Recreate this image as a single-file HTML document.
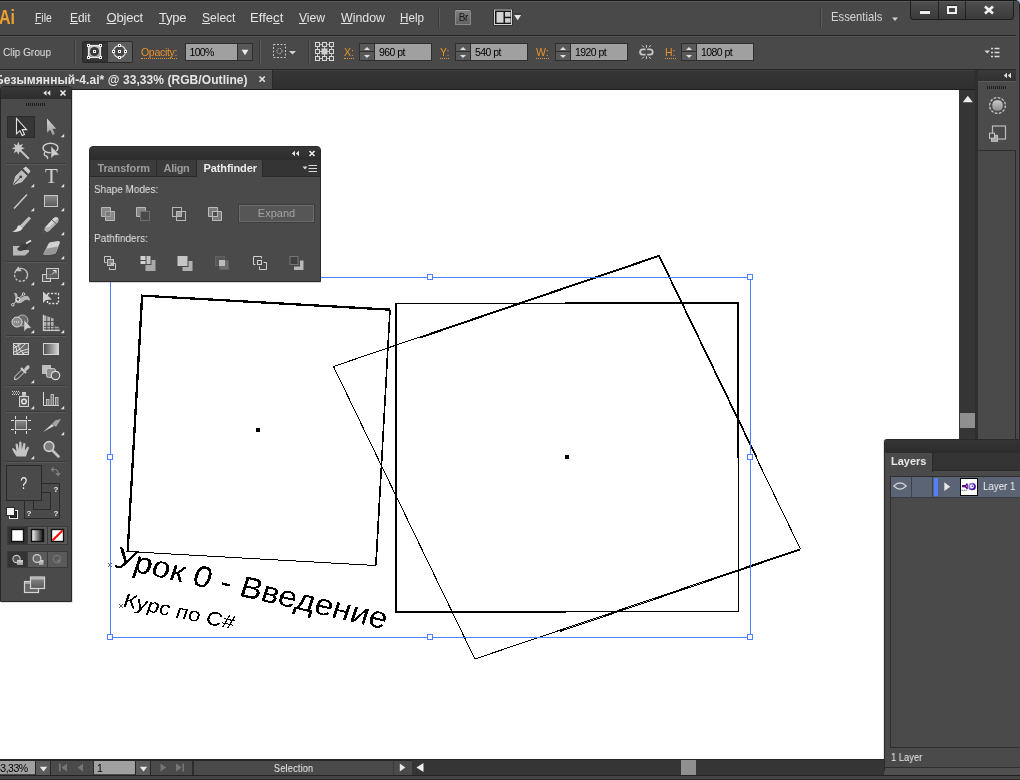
<!DOCTYPE html>
<html><head><meta charset="utf-8">
<style>
*{box-sizing:border-box;margin:0;padding:0}
html,body{width:1020px;height:780px;overflow:hidden;background:#494949;font-family:"Liberation Sans",sans-serif;font-size:11px;color:#dcdcdc}
.abs{position:absolute}
body>*{will-change:transform}
#menubar{left:0;top:0;width:1020px;height:35px;background:#494949;border-top:1px solid #161616;box-shadow:inset 0 1px 0 #5c5c5c}
#menubar .mi{position:absolute;top:9px;font-size:13px;color:#e4e4e4;white-space:nowrap;letter-spacing:-0.2px}
#menubar .mi u{text-decoration:underline;text-underline-offset:1px}
#ctrlbar{left:0;top:35px;width:1016px;height:35px;background:#494949;border-top:1px solid #262626;border-bottom:1px solid #262626;box-shadow:inset 0 1px 0 #565656}
.lbl{position:absolute;font-size:10.5px;color:#e8912d;border-bottom:1px dotted #e8912d;line-height:12px;white-space:nowrap}
.fld{position:absolute;top:43px;height:18px;background:#a0a0a0;border:1px solid #2e2e2e;color:#000;font-size:10.5px;line-height:16px;padding-left:4px;white-space:nowrap;letter-spacing:-0.55px}
.spin{position:absolute;top:43px;width:16px;height:18px;background:#595959;border:1px solid #2e2e2e}
.spin:before{content:"";position:absolute;left:3.500px;top:2.500px;border:3.500px solid transparent;border-top:0;border-bottom:3.500px solid #dedede}
.spin:after{content:"";position:absolute;left:3.500px;bottom:2.500px;border:3.500px solid transparent;border-bottom:0;border-top:3.500px solid #dedede}
.spin i{position:absolute;left:0;top:7px;width:14px;height:1px;background:#2e2e2e}
#tabbar{left:0;top:70px;width:977px;height:20px;background:linear-gradient(#363636,#2f2f2f);border-bottom:1px solid #1e1e1e;box-shadow:inset 0 1px 0 #3e3e3e}
#doctab{left:0;top:70px;width:273px;height:19px;background:#4a4a4a;border-right:1px solid #2a2a2a;box-shadow:inset 0 1px 0 #585858;color:#e6e6e6;font-weight:bold;font-size:12px;line-height:21px;white-space:nowrap;overflow:hidden}
#canvas{left:0;top:90px;width:959px;height:670px;background:#fff}
#vscroll{left:959px;top:90px;width:18px;height:670px;background:#353535}
#rdock{left:977px;top:70px;width:39px;height:706px;background:#4a4a4a;border-left:1px solid #2e2e2e;border-right:1px solid #2a2a2a}
#rightedge{left:1019px;top:1px;width:1px;height:779px;background:#2a2a2a}
#statusbar{left:0;top:760px;width:884px;height:16px;background:#353535}
#bottomedge{left:0;top:775px;width:1020px;height:5px;background:#454545;border-top:1px solid #222;border-bottom:1px solid #2a2a2a}
.panel{background:#4a4a4a}
</style></head><body>

<!-- MENU BAR -->
<div id="menubar" class="abs">
  <div class="abs" style="left:-1px;top:4px;font-size:21px;font-weight:bold;color:#eda12f;letter-spacing:0;line-height:24px;transform:scaleX(0.76);transform-origin:0 0">Ai</div>
  <span class="mi" style="left:34.5px;letter-spacing:0;transform-origin:0 50%;transform:scaleX(0.8)"><u>F</u>ile</span>
  <span class="mi" style="left:69.5px;letter-spacing:0;transform-origin:0 50%;transform:scaleX(0.915)"><u>E</u>dit</span>
  <span class="mi" style="left:106.5px"><u>O</u>bject</span>
  <span class="mi" style="left:159px"><u>T</u>ype</span>
  <span class="mi" style="left:201.5px;letter-spacing:0;transform-origin:0 50%;transform:scaleX(0.925)"><u>S</u>elect</span>
  <span class="mi" style="left:250px;letter-spacing:0.05px">Effe<u>c</u>t</span>
  <span class="mi" style="left:299px;letter-spacing:0;transform-origin:0 50%;transform:scaleX(0.93)"><u>V</u>iew</span>
  <span class="mi" style="left:341px;letter-spacing:0;transform-origin:0 50%;transform:scaleX(0.952)"><u>W</u>indow</span>
  <span class="mi" style="left:400px;letter-spacing:0;transform-origin:0 50%;transform:scaleX(0.896)"><u>H</u>elp</span>
  <div class="abs" style="left:438px;top:7px;width:1px;height:20px;background:#3a3a3a"></div>
  <div class="abs" style="left:439px;top:7px;width:1px;height:20px;background:#595959"></div>
  <!-- Br button -->
  <div class="abs" style="left:455.300px;top:8.500px;width:16px;height:15.500px;background:linear-gradient(#7e7e7e,#626262);border:1px solid #8a8a8a;border-top-color:#a2a2a2;border-radius:1px 2px 1px 1px;box-shadow:0 -1px 0 #3c3c3c;color:#161616;font-size:10px;font-weight:normal;line-height:14px;text-align:center;letter-spacing:-0.5px">Br</div>
  <!-- arrange docs -->
  <svg class="abs" style="left:493px;top:7px" width="30" height="19" viewBox="493 8 30 19">
    <rect x="493.500" y="9" width="19" height="16.500" fill="#1a1a1a"/>
    <rect x="494.500" y="10" width="17" height="14.500" fill="#161616" stroke="#d6d6d6" stroke-width="1"/>
    <rect x="496.500" y="12" width="7" height="10.700" fill="#d2d2d2"/>
    <rect x="505" y="12" width="5.600" height="4.700" fill="#cdcdcd"/>
    <rect x="505" y="18.200" width="5.600" height="4.500" fill="#cdcdcd"/>
    <path d="M514,14.700 H521.300 L517.650,20.300 Z" fill="#e6e6e6"/>
    <path d="M514,14.200 H521.300" stroke="#2a2a2a" stroke-width="1"/>
  </svg>
  <div class="abs" style="left:820px;top:7px;width:1px;height:20px;background:#3a3a3a"></div>
  <div class="abs" style="left:821px;top:7px;width:1px;height:20px;background:#5c5c5c"></div>
  <span class="mi" style="left:831px;top:8px;color:#d4d4d4;letter-spacing:0;transform-origin:0 50%;transform:scaleX(0.868)">Essentials</span>
  <svg class="abs" style="left:891px;top:16px" width="8" height="5"><path d="M1,0.5 L7,0.5 L4,4 Z" fill="#d0d0d0"/></svg>
  <!-- window buttons -->
  <div class="abs" style="left:910px;top:-1px;width:104px;height:20px;border:1px solid #1c1c1c;border-top-color:#161616;border-radius:0 0 4px 4px;background:linear-gradient(#4e4e4e,#3b3b3b);box-shadow:inset 0 1px 0 #5a5a5a"></div>
  <div class="abs" style="left:938px;top:-1px;width:1px;height:19px;background:#222"></div>
  <div class="abs" style="left:965px;top:-1px;width:1px;height:19px;background:#222"></div>
  <div class="abs" style="left:920px;top:10px;width:10px;height:3px;background:#f0f0f0;box-shadow:0 -1px 0 #2a2a2a"></div>
  <div class="abs" style="left:947px;top:5px;width:10px;height:8px;border:2px solid #f0f0f0;box-shadow:0 -1px 0 #2a2a2a"></div>
  <svg class="abs" style="left:983px;top:4px" width="12" height="10" viewBox="0 0 12 10"><path d="M2,1.500 L10,8.500 M10,1.500 L2,8.500" stroke="#f0f0f0" stroke-width="2.700" fill="none"/></svg>
</div>

<!-- CONTROL BAR -->
<div id="ctrlbar" class="abs"></div>
<div class="abs" style="left:2.500px;top:46px;font-size:11px;color:#e4e4e4;white-space:nowrap;transform-origin:0 50%;transform:scaleX(0.913)">Clip Group</div>


<!-- control bar widgets -->
<div class="abs" style="left:74px;top:40px;width:1px;height:25px;background:#3a3a3a"></div>
<div class="abs" style="left:75px;top:40px;width:1px;height:25px;background:#5a5a5a"></div>
<div class="abs" style="left:82px;top:41px;width:51px;height:22px;background:#5c5c5c;border:1px solid #2a2a2a;border-radius:2px"></div>
<div class="abs" style="left:83px;top:42px;width:25px;height:20px;background:#353535;box-shadow:inset 0 0 0 1px #2e2e2e"></div>
<svg class="abs" style="left:82px;top:40px" width="52" height="24" viewBox="82 40 52 24">
  <defs><linearGradient id="gI" x1="0" y1="0" x2="0" y2="1"><stop offset="0" stop-color="#c4c4c4"/><stop offset="1" stop-color="#8c8c8c"/></linearGradient></defs>
  <rect x="88.500" y="45.500" width="12" height="12" fill="url(#gI)" stroke="#e6e6e6" stroke-width="1.200"/>
  <circle cx="94.500" cy="51.500" r="4.600" fill="#3b3b3b"/>
  <circle cx="94.500" cy="51.500" r="5.400" fill="none" stroke="#dcdcdc" stroke-width="0.500"/>
  <g fill="#f2f2f2"><rect x="87" y="44" width="3" height="3"/><rect x="99" y="44" width="3" height="3"/><rect x="87" y="56" width="3" height="3"/><rect x="99" y="56" width="3" height="3"/><rect x="93" y="50" width="3" height="3"/></g>
  <g fill="#1e1e1e"><rect x="88" y="45" width="1" height="1"/><rect x="100" y="45" width="1" height="1"/><rect x="88" y="57" width="1" height="1"/><rect x="100" y="57" width="1" height="1"/><rect x="94" y="51" width="1" height="1"/></g>
  <circle cx="119.500" cy="51.500" r="6" fill="#484848" stroke="#e0e0e0" stroke-width="1.100"/>
  <g fill="#f2f2f2"><rect x="118" y="44" width="3" height="3"/><rect x="118" y="56" width="3" height="3"/><rect x="112" y="50" width="3" height="3"/><rect x="124" y="50" width="3" height="3"/><rect x="118" y="50" width="3" height="3"/></g>
  <g fill="#1e1e1e"><rect x="119" y="45" width="1" height="1"/><rect x="119" y="57" width="1" height="1"/><rect x="113" y="51" width="1" height="1"/><rect x="125" y="51" width="1" height="1"/><rect x="119" y="51" width="1" height="1"/></g>
</svg>
<span class="lbl" style="left:140.5px;top:46px;letter-spacing:-0.3px">Opacity:</span>
<div class="fld" style="left:185px;width:53px;padding-left:3.500px;letter-spacing:-0.7px">100%</div>
<div class="abs" style="left:237px;top:43px;width:16px;height:18px;background:#585858;border:1px solid #2e2e2e"></div>
<svg class="abs" style="left:241px;top:49px" width="9" height="7"><path d="M0.600,0.800 L7.400,0.800 L4,6.200 Z" fill="#ececec"/></svg>
<div class="abs" style="left:259px;top:40px;width:1px;height:25px;background:#3a3a3a"></div>
<div class="abs" style="left:260px;top:40px;width:1px;height:25px;background:#5a5a5a"></div>
<svg class="abs" style="left:272px;top:43px" width="26" height="17" viewBox="0 0 26 17">
  <rect x="1.5" y="1.5" width="12" height="13" fill="none" stroke="#c4c4c4" stroke-dasharray="2 1.5"/>
  <circle cx="7.5" cy="8" r="2.6" fill="none" stroke="#c4c4c4" stroke-dasharray="1.5 1"/>
  <path d="M17,8 L24,8 L20.5,11.5 Z" fill="#d0d0d0"/>
</svg>
<div class="abs" style="left:308px;top:40px;width:1px;height:25px;background:#3a3a3a"></div>
<div class="abs" style="left:309px;top:40px;width:1px;height:25px;background:#5a5a5a"></div>
<svg class="abs" style="left:314px;top:41px" width="22" height="22" viewBox="0 0 22 22">
  <path d="M3.500,3.500 H17.500 V17.500 H3.500 Z M3.500,10.500 H17.500 M10.500,3.500 V17.500" fill="none" stroke="#c4c4c4"/>
  <g fill="#4f4f4f" stroke="#d8d8d8">
   <rect x="1.500" y="1.500" width="4" height="4"/><rect x="8.500" y="1.500" width="4" height="4"/><rect x="15.500" y="1.500" width="4" height="4"/>
   <rect x="1.500" y="8.500" width="4" height="4"/><rect x="15.500" y="8.500" width="4" height="4"/>
   <rect x="1.500" y="15.500" width="4" height="4"/><rect x="8.500" y="15.500" width="4" height="4"/><rect x="15.500" y="15.500" width="4" height="4"/>
  </g>
  <rect x="7.500" y="7.500" width="6" height="6" fill="#cfcfcf"/>
</svg>
<span class="lbl" style="left:344px;top:46px">X:</span>
<div class="spin" style="left:359px"><i></i></div><div class="fld" style="left:374px;width:58px">960 pt</div>
<span class="lbl" style="left:440px;top:46px">Y:</span>
<div class="spin" style="left:455px"><i></i></div><div class="fld" style="left:470px;width:58px">540 pt</div>
<span class="lbl" style="left:536px;top:46px">W:</span>
<div class="spin" style="left:555px"><i></i></div><div class="fld" style="left:570px;width:58px">1920 pt</div>
<svg class="abs" style="left:637px;top:42px" width="18" height="19" viewBox="637 42 18 19">
  <path d="M645.600,49.400 H642.700 A2.600,2.600 0 0 0 642.700,54.600 H645.600 M647.200,49.400 H650.100 A2.600,2.600 0 0 1 650.100,54.600 H647.200" fill="none" stroke="#c6c6c6" stroke-width="1.900"/>
  <path d="M646.400,45 V47.700 M646.400,56.300 V59 M642,45.300 L643.800,47.200 M650.800,45.300 L649,47.200 M642,58.700 L643.800,56.800 M650.800,58.700 L649,56.800" stroke="#d4d4d4" stroke-width="1"/>
</svg>
<span class="lbl" style="left:665px;top:46px">H:</span>
<div class="spin" style="left:681px"><i></i></div><div class="fld" style="left:696px;width:58px">1080 pt</div>
<svg class="abs" style="left:984px;top:47px" width="16" height="11" viewBox="0 0 16 11">
  <path d="M0.5,3.5 L6,3.5 L3.2,6.5 Z" fill="#d8d8d8"/>
  <path d="M7,1.5 H9 M7,5.5 H9 M7,9.5 H9 M10.5,1.5 H15.5 M10.5,5.5 H15.5 M10.5,9.5 H15.5" stroke="#d8d8d8" stroke-width="1.4"/>
</svg>

<!-- TAB BAR -->
<div id="tabbar" class="abs"></div>
<div id="doctab" class="abs"><span style="position:absolute;left:-5px;letter-spacing:0.07px">Безымянный-4.ai* @ 33,33% (RGB/Outline)</span></div>


<svg class="abs" style="left:258px;top:75px" width="8" height="8"><path d="M1.500,1.500 L6.800,6.800 M6.800,1.500 L1.500,6.800" stroke="#e4e4e4" stroke-width="1.600" fill="none"/></svg>
<!-- CANVAS -->
<div id="canvas" class="abs"></div>
<svg class="abs" style="left:0;top:89px" width="959" height="671" viewBox="0 89 959 671">
  <g shape-rendering="crispEdges" fill="none" stroke="#000">
    <!-- left tilted square -->
    <polygon points="141.5,295 390,309 375.5,565.5 127,551.5" stroke-width="1"/>
    <polyline points="127.8,551 142.3,295.8 390,309.8" stroke-width="2"/>
    <polyline points="390,309.5 376,565" stroke-width="1.6"/>
    <!-- big rectangle -->
    <rect x="395.5" y="303.5" width="343" height="308" stroke-width="1"/>
    <line x1="396.5" y1="303" x2="396.5" y2="612" stroke-width="1"/>
    <line x1="565" y1="302.5" x2="739" y2="302.5" stroke-width="1"/>
    <line x1="737.5" y1="303" x2="737.5" y2="458" stroke-width="1"/>
    <line x1="395" y1="612.5" x2="566" y2="612.5" stroke-width="1"/>
    <!-- skewed quad -->
    <polygon points="333.5,366.5 658.5,255.5 800.3,548.8 474.9,659" stroke-width="1"/>
    <polyline points="420,338 658.5,256.5" stroke-width="1"/>
    <polyline points="800.3,549.8 560,631.5" stroke-width="1"/>
    <polyline points="659.300,255.500 757,457.500" stroke-width="1"/>
  </g>
  <rect x="256" y="428" width="4" height="4" fill="#000"/>
  <rect x="565" y="455" width="4" height="4" fill="#000"/>
  <!-- text -->
  <filter id="thr" x="-5%" y="-5%" width="110%" height="110%"><feComponentTransfer><feFuncA type="discrete" tableValues="0 0 1 1"/></feComponentTransfer></filter>
  <g fill="#000" font-family="Liberation Sans, sans-serif" filter="url(#thr)">
    <text transform="translate(112.500,566.500) rotate(13) skewX(-5)" font-size="30" textLength="279" lengthAdjust="spacingAndGlyphs">Урок 0 - Введение</text>
    <text transform="translate(122,606) rotate(12) skewX(-6)" font-size="19.500" textLength="113" lengthAdjust="spacingAndGlyphs">Курс по C#</text>
  </g>
  <path d="M108,563 l4,4 m0,-4 l-4,4 M119,604 l4,4 m0,-4 l-4,4" stroke="#333" stroke-width="0.8" fill="none"/>
  <!-- selection bbox -->
  <g shape-rendering="crispEdges" stroke="#4f80ff" stroke-width="1" fill="none">
    <rect x="110.5" y="277.5" width="640" height="360"/>
    <g fill="#fff">
      <rect x="107.5" y="274.5" width="5" height="5"/><rect x="427.5" y="274.5" width="5" height="5"/><rect x="747.5" y="274.5" width="5" height="5"/>
      <rect x="107.5" y="454.5" width="5" height="5"/><rect x="747.5" y="454.5" width="5" height="5"/>
      <rect x="107.5" y="634.5" width="5" height="5"/><rect x="427.5" y="634.5" width="5" height="5"/><rect x="747.5" y="634.5" width="5" height="5"/>
    </g>
  </g>
</svg>
<!-- vertical scrollbar -->
<div id="vscroll" class="abs"></div>
<svg class="abs" style="left:962px;top:95px" width="12" height="8"><path d="M5.800,0.800 L10.800,7.200 L0.800,7.200 Z" fill="#ededed"/></svg>
<div class="abs" style="left:960px;top:413px;width:15px;height:15px;background:#8f8f8f"></div>
<!-- right dock -->
<div class="abs" style="left:975px;top:70px;width:3px;height:706px;background:#2e2e2e"></div>
<div id="rdock" class="abs"></div>
<div class="abs" style="left:978px;top:70px;width:38px;height:11px;background:linear-gradient(#3a3a3a,#303030)"></div>
<svg class="abs" style="left:1003px;top:72px" width="9" height="7"><path d="M4,0.800 L4,6.200 L0.800,3.500 Z M8,0.800 L8,6.200 L4.800,3.500 Z" fill="#e0e0e0"/></svg>
<div class="abs" style="left:978px;top:81px;width:38px;height:70px;background:#4b4b4b;border-top:1px solid #5a5a5a;border-bottom:1px solid #2e2e2e"></div>
<div class="abs" style="left:987px;top:86px;width:20px;height:3px;background:repeating-linear-gradient(90deg,#1e1e1e 0 1px,transparent 1px 2px)"></div>
<svg class="abs" style="left:987px;top:95px" width="21" height="21" viewBox="0 0 21 21">
  <defs><linearGradient id="gA" x1="0" y1="0" x2="0" y2="1"><stop offset="0" stop-color="#c8c8c8"/><stop offset="1" stop-color="#8e8e8e"/></linearGradient></defs>
  <circle cx="10.5" cy="10.5" r="7.900" fill="none" stroke="#c4c4c4" stroke-width="1.300" stroke-dasharray="2.700 1.430"/>
  <rect x="5.300" y="5.300" width="10.400" height="10.400" rx="4.300" fill="url(#gA)"/>
</svg>
<svg class="abs" style="left:988px;top:125px" width="20" height="19" viewBox="0 0 20 19">
  <rect x="4.500" y="1" width="13" height="13" fill="none" stroke="#bdbdbd" stroke-width="1.200"/>
  <rect x="3.500" y="10.300" width="6" height="6" fill="#a8a8a8" stroke="#c4c4c4"/>
  <rect x="1.500" y="8.200" width="5" height="5" fill="#4a4a4a" stroke="#c8c8c8"/>
</svg>
<div id="rightedge" class="abs"></div>
<div class="abs" style="left:1014px;top:0;width:6px;height:6px;background:#a9c6ec"></div><div class="abs" style="left:1014px;top:0;width:5.700px;height:10px;background:#494949;border-top:1px solid #161616;border-right:1.200px solid #222;border-radius:0 5px 0 0;box-shadow:inset 0 1px 0 #5a5a5a"></div>

<!-- STATUS BAR -->
<div id="statusbar" class="abs"></div>
<div class="abs" style="left:0;top:760px;width:412px;height:15px;background:#4a4a4a"></div>
<div class="abs" style="left:0;top:761px;width:35px;height:13px;background:#a0a0a0;color:#000;font-size:10.5px;line-height:15px;letter-spacing:-0.5px;overflow:hidden;white-space:nowrap"><span style="position:absolute;left:-5px">33,33%</span></div>
<div class="abs" style="left:35px;top:760px;width:16px;height:15px;background:#5c5c5c;border-left:1px solid #262626;border-right:1px solid #262626"></div>
<svg class="abs" style="left:39px;top:766px" width="9" height="6"><path d="M0.800,0.800 L8.200,0.800 L4.500,5.600 Z" fill="#e8e8e8"/></svg>
<svg class="abs" style="left:58px;top:763px" width="28" height="9" viewBox="0 0 28 9"><path d="M1,0.5 H2.6 V8.5 H1 Z M9,0.5 V8.5 L3.2,4.5 Z M25,0.5 V8.5 L19.5,4.5 Z" fill="#757575"/></svg>
<div class="abs" style="left:93px;top:760px;width:1px;height:15px;background:#2e2e2e"></div>
<div class="abs" style="left:94px;top:761px;width:41px;height:13px;background:#a0a0a0;color:#000;font-size:10.5px;line-height:15px;padding-left:3px">1</div>
<div class="abs" style="left:135px;top:760px;width:16px;height:15px;background:#5c5c5c;border-left:1px solid #262626;border-right:1px solid #262626"></div>
<svg class="abs" style="left:139px;top:766px" width="9" height="6"><path d="M0.800,0.800 L8.200,0.800 L4.500,5.600 Z" fill="#e8e8e8"/></svg>
<svg class="abs" style="left:159px;top:763px" width="28" height="9" viewBox="0 0 28 9"><path d="M1.5,0.5 V8.5 L7.2,4.5 Z M17,0.5 V8.5 L22.8,4.5 Z M23.4,0.5 H25 V8.5 H23.4 Z" fill="#757575"/></svg>
<div class="abs" style="left:192px;top:760px;width:2px;height:15px;background:#2e2e2e"></div>
<div class="abs" style="left:194px;top:760px;width:199px;height:15px;color:#e8e8e8;font-size:11px;line-height:17px;text-align:center;overflow:hidden;transform:scaleX(0.87)">Selection</div>
<div class="abs" style="left:393px;top:760px;width:1px;height:15px;background:#3a3a3a"></div>
<svg class="abs" style="left:399px;top:763px" width="7" height="9"><path d="M0.800,0.600 V8.400 L6.300,4.500 Z" fill="#e8e8e8"/></svg>
<svg class="abs" style="left:416px;top:763px" width="8" height="9"><path d="M7.5,0 V9 L0.5,4.5 Z" fill="#f0f0f0"/></svg>
<div class="abs" style="left:681px;top:760px;width:15px;height:15px;background:#8f8f8f"></div>
<div class="abs" style="left:0;top:759px;width:884px;height:1px;background:#262626"></div><div class="abs" style="left:0;top:760px;width:412px;height:1px;background:#262626"></div>
<div id="bottomedge" class="abs"></div>

<!-- LAYERS PANEL -->
<div class="abs" style="left:883px;top:440px;width:1px;height:319px;background:#e2e2e2"></div>
<div class="abs" style="left:884px;top:439px;width:136px;height:332px;background:#4a4a4a;border-left:1px solid #2a2a2a;border-top:1px solid #2a2a2a;border-radius:3px 0 0 0"></div>
<div class="abs" style="left:885px;top:440px;width:135px;height:13px;background:linear-gradient(#343434,#2c2c2c);border-radius:3px 0 0 0"></div>
<div class="abs" style="left:885px;top:453px;width:135px;height:18px;background:#333;border-bottom:1px solid #2a2a2a"></div>
<div class="abs" style="left:885px;top:453px;width:48px;height:19px;background:#4a4a4a;border-right:1px solid #2a2a2a;color:#e8e8e8;font-weight:bold;font-size:11px;line-height:17px;padding-left:6px">Layers</div>
<div class="abs" style="left:890px;top:476px;width:130px;height:272px;border:1px solid #2e2e2e;border-right:0;background:#4a4a4a"></div>
<div class="abs" style="left:891px;top:477px;width:129px;height:21px;background:#5b6474;border-bottom:1px solid #383c44"></div>
<div class="abs" style="left:911px;top:477px;width:1px;height:20px;background:#3c424c"></div>
<div class="abs" style="left:932px;top:477px;width:1px;height:20px;background:#3c424c"></div>
<svg class="abs" style="left:893px;top:481px" width="14" height="10" viewBox="0 0 14 10"><path d="M0.800,5 Q7,-1.200 13.200,5 Q7,11.200 0.800,5 Z" fill="none" stroke="#d6d6d6" stroke-width="1.100"/></svg>
<div class="abs" style="left:934px;top:478px;width:4px;height:18px;background:#4f80ff"></div>
<svg class="abs" style="left:943px;top:481px" width="8" height="11"><path d="M1.300,1.300 V10 L7.200,5.650 Z" fill="#e6e6e6"/></svg>
<svg class="abs" style="left:960px;top:478px" width="18" height="18" viewBox="0 0 18 18">
  <defs><linearGradient id="gT" x1="0" y1="0" x2="1" y2="0.600"><stop offset="0" stop-color="#b49af4"/><stop offset="1" stop-color="#3a0a96"/></linearGradient></defs>
  <rect x="0.500" y="0.500" width="17" height="17" fill="#fff" stroke="#050505"/>
  <rect x="2" y="7" width="4" height="2.300" fill="#5e0e7e"/>
  <path d="M7.200,5.600 V11.200 M7,5.900 L5,8.200 L7,10.600" fill="none" stroke="#5e0e7e" stroke-width="1.200"/>
  <circle cx="12" cy="8.500" r="2.900" fill="none" stroke="url(#gT)" stroke-width="1.900"/>
  <circle cx="12.300" cy="8.300" r="0.800" fill="#4a1ab0"/>
  <path d="M1.500,12.300 h5.500" stroke="#4a4a4a" stroke-width="0.700" stroke-dasharray="1.500 0.500"/>
</svg>
<div class="abs" style="left:982.500px;top:480px;font-size:11px;color:#f2f2f2;white-space:nowrap;line-height:13px;transform-origin:0 50%;transform:scaleX(0.886)">Layer 1</div>
<div class="abs" style="left:890.500px;top:751px;font-size:11px;color:#ececec;white-space:nowrap;line-height:13px;transform-origin:0 50%;transform:scaleX(0.85)">1 Layer</div>
<div class="abs" style="left:885px;top:767px;width:135px;height:1px;background:#2e2e2e"></div>
<div class="abs" style="left:885px;top:768px;width:135px;height:7px;background:#505050"></div>


<!-- PATHFINDER PANEL -->
<div class="abs" style="left:89px;top:146px;width:232px;height:136px;background:#4a4a4a;border:1px solid #2a2a2a;border-radius:4px 4px 0 0;box-shadow:0 1px 0 rgba(0,0,0,0.15)"></div>
<div class="abs" style="left:90px;top:147px;width:230px;height:13px;background:linear-gradient(#363636,#2c2c2c);border-radius:3px 3px 0 0"></div>
<svg class="abs" style="left:291px;top:150px" width="9" height="7"><path d="M4,0.800 L4,6.200 L0.800,3.500 Z M8,0.800 L8,6.200 L4.800,3.500 Z" fill="#e0e0e0"/></svg>
<svg class="abs" style="left:308px;top:150px" width="8" height="7"><path d="M1.500,1 L6.500,6 M6.500,1 L1.500,6" stroke="#ececec" stroke-width="1.600" fill="none"/></svg>
<div class="abs" style="left:90px;top:160px;width:230px;height:17px;background:#343434;border-bottom:1px solid #2a2a2a"></div>
<div class="abs" style="left:90px;top:160px;width:67px;height:16px;background:#3b3b3b;border-right:1px solid #2a2a2a;color:#9c9c9c;font-weight:bold;font-size:11px;line-height:16px;padding-left:7.500px;letter-spacing:-0.15px;white-space:nowrap">Transform</div>
<div class="abs" style="left:157px;top:160px;width:40px;height:16px;background:#3b3b3b;border-right:1px solid #2a2a2a;color:#9c9c9c;font-weight:bold;font-size:11px;line-height:16px;padding-left:6.500px;letter-spacing:-0.3px;white-space:nowrap">Align</div>
<div class="abs" style="left:197px;top:160px;width:66px;height:17px;background:#4a4a4a;border-right:1px solid #2a2a2a;color:#ececec;font-weight:bold;font-size:11px;line-height:16px;padding-left:6.500px;letter-spacing:-0.1px;white-space:nowrap">Pathfinder</div>
<svg class="abs" style="left:302px;top:164px" width="16" height="9" viewBox="0 0 16 9">
  <path d="M0.500,2.500 L5.500,2.500 L3,5.500 Z" fill="#d8d8d8"/>
  <path d="M6.500,1.500 H15 M6.500,4.500 H15 M6.500,7.500 H15" stroke="#d8d8d8" stroke-width="1"/>
</svg>
<div class="abs" style="left:94px;top:183px;font-size:11px;color:#e2e2e2;white-space:nowrap;line-height:13px;transform-origin:0 50%;transform:scaleX(0.905)">Shape Modes:</div>
<div class="abs" style="left:94px;top:232px;font-size:11px;color:#e2e2e2;white-space:nowrap;line-height:13px;transform-origin:0 50%;transform:scaleX(0.917)">Pathfinders:</div>
<div class="abs" style="left:239px;top:205px;width:75px;height:17px;background:#565656;border:1px solid #6b6b6b;box-shadow:0 0 0 1px #3e3e3e;color:#a2a2a2;font-size:11px;line-height:15px;text-align:center">Expand</div>
<svg class="abs" style="left:98px;top:203px" width="130" height="20" viewBox="0 0 130 20">
  <defs><linearGradient id="gP" x1="0" y1="0" x2="1" y2="1"><stop offset="0" stop-color="#8a8a8a"/><stop offset="1" stop-color="#b4b4b4"/></linearGradient></defs>
  <!-- unite -->
  <path d="M3.500,4.500 H12.500 V8.500 H16.500 V17.500 H7.500 V13.500 H3.500 Z" fill="#868686" stroke="#b8b8b8"/>
  <rect x="7.500" y="8.500" width="5" height="5" fill="#7a7a7a" stroke="#a4a4a4"/>
  <!-- minus front -->
  <path d="M38.500,4.500 H47.500 V8.500 H42.500 V13.500 H38.500 Z" fill="#868686" stroke="#b8b8b8"/>
  <rect x="42.500" y="8.500" width="9" height="9" fill="none" stroke="#6e6e6e"/>
  <!-- intersect -->
  <rect x="74.500" y="4.500" width="9" height="9" fill="none" stroke="#b8b8b8"/>
  <rect x="78.500" y="8.500" width="9" height="9" fill="none" stroke="#b8b8b8"/>
  <rect x="79" y="9" width="4" height="4" fill="#9a9a9a"/>
  <!-- exclude -->
  <path d="M110.500,4.500 H119.500 V8.500 H123.500 V17.500 H114.500 V13.500 H110.500 Z" fill="#7a7a7a" stroke="#bcbcbc"/>
  <rect x="114.500" y="8.500" width="5" height="5" fill="#4a4a4a" stroke="#bcbcbc"/>
</svg>
<svg class="abs" style="left:102px;top:254px" width="206" height="20" viewBox="0 0 206 20">
  <!-- divide -->
  <g fill="none" stroke="#c8c8c8"><path d="M2.500,2.500 H8.500 V4.500 M2.500,2.500 V8.500 H4.500"/><rect x="5.500" y="5.500" width="6" height="6" fill="#7a7a7a"/><path d="M13.500,9.500 V15.500 H7.500 V13.500 M13.500,9.500 H11.500"/><rect x="8.500" y="8.500" width="3" height="3" fill="#bdbdbd" stroke="none"/></g>
  <!-- trim -->
  <g transform="translate(-2.500,0)"><rect x="41" y="2" width="5" height="4" fill="#d2d2d2"/><rect x="41" y="7" width="5" height="3" fill="#d2d2d2"/><rect x="47" y="2" width="4" height="8" fill="#c4c4c4"/>
  <path d="M46,11 H52 V6 H56 V17 H46 Z" fill="#a8a8a8"/></g>
  <!-- merge -->
  <g transform="translate(-1.500,0)"><rect x="77" y="2" width="10" height="10" fill="#c6c6c6"/><path d="M82,13 H88 V7 H92 V17 H82 Z" fill="#b0b0b0"/></g>
  <!-- crop -->
  <g transform="translate(-1,0)"><rect x="114.500" y="2.500" width="9" height="9" fill="#565656" stroke="#626262"/><rect x="118.500" y="6.500" width="9" height="9" fill="#6e6e6e" stroke="#626262"/><rect x="118" y="6" width="6" height="6" fill="#bcbcbc"/></g>
  <!-- outline -->
  <g fill="none" stroke="#d0d0d0" transform="translate(-1,0)"><path d="M154.500,10.500 H152.500 V2.500 H160.500 V4.500"/><rect x="156.500" y="6.500" width="4" height="4"/><path d="M158.500,12.500 V15.500 H165.500 V8.500 H162.500"/></g>
  <!-- minus back -->
  <g transform="translate(-1.500,0)"><rect x="189.500" y="2.500" width="8" height="8" fill="#404040" stroke="#767676"/><path d="M199.500,6.500 H203 V16 H193.500 V12.500 H199.500 Z" fill="#b8b8b8"/><path d="M198.500,7 H201 V14 H194 V11.500 H198.500 Z" fill="#4a4a4a" opacity="0"/></g>
</svg>


<!-- TOOLBOX -->
<div class="abs" style="left:0;top:86px;width:72px;height:516px;background:#4a4a4a;border:1px solid #262626;border-radius:4px 4px 0 0;box-shadow:1px 1px 0 rgba(0,0,0,0.12)"></div>
<div class="abs" style="left:1px;top:87px;width:70px;height:12px;background:linear-gradient(#383838,#2d2d2d);border-radius:0 3px 0 0"></div>
<svg class="abs" style="left:0;top:85px" width="73" height="518" viewBox="0 85 73 518">
<defs>
 <linearGradient id="tg" x1="0" y1="0" x2="0" y2="1"><stop offset="0" stop-color="#8a8a8a"/><stop offset="1" stop-color="#5a5a5a"/></linearGradient>
 <linearGradient id="tg2" x1="0" y1="0" x2="1" y2="0"><stop offset="0" stop-color="#4a4a4a"/><stop offset="1" stop-color="#d8d8d8"/></linearGradient>
 <linearGradient id="tg3" x1="0" y1="0" x2="1" y2="0"><stop offset="0" stop-color="#ffffff"/><stop offset="1" stop-color="#050505"/></linearGradient>
 <linearGradient id="tg4" x1="0" y1="0" x2="0" y2="1"><stop offset="0" stop-color="#d6d6d6"/><stop offset="1" stop-color="#9a9a9a"/></linearGradient>
</defs>
<!-- header icons -->
<path d="M46.500,90.200 v5.600 l-3.300,-2.800 z M50.300,90.200 v5.600 l-3.300,-2.800 z" fill="#e0e0e0"/>
<path d="M60.500,90.500 l5,5 m0,-5 l-5,5" stroke="#ececec" stroke-width="1.600" fill="none"/>
<!-- grip -->
<g fill="#1c1c1c"><rect x="26" y="103" width="1" height="3"/><rect x="28" y="103" width="1" height="3"/><rect x="30" y="103" width="1" height="3"/><rect x="32" y="103" width="1" height="3"/><rect x="34" y="103" width="1" height="3"/><rect x="36" y="103" width="1" height="3"/><rect x="38" y="103" width="1" height="3"/><rect x="40" y="103" width="1" height="3"/><rect x="42" y="103" width="1" height="3"/><rect x="44" y="103" width="1" height="3"/></g>
<!-- separators -->
<g stroke="#3a3a3a" stroke-width="1"><path d="M6,163.500 H66 M6,261.500 H66 M6,335.500 H66 M6,385.500 H66 M6,411.500 H66 M6,461.500 H66"/></g>
<g stroke="#595959" stroke-width="1"><path d="M6,164.500 H66 M6,262.500 H66 M6,336.500 H66 M6,386.500 H66 M6,412.500 H66 M6,462.500 H66"/></g>

<!-- row1: selection (active) / direct selection -->
<rect x="7.500" y="116.500" width="27" height="21" fill="#363636" stroke="#2b2b2b"/>
<path d="M16.500,118.500 V133.800 L19.900,130.700 L22.200,135.600 L24.500,134.500 L22.200,129.600 H26.600 Z" fill="#2a2a2a" stroke="#e4e4e4" stroke-width="1.100" stroke-linejoin="miter"/>
<path d="M47,118.400 V132.800 L50.200,129.800 L52.600,135 L54.900,133.900 L52.500,128.800 H56.300 Z" fill="url(#tg4)"/>
<path d="M64.2,133.8 v3.400 h-3.400 z" fill="#e0e0e0"/>
<!-- row2: magic wand / lasso -->
<path d="M21.500,151.500 L28.800,158.800" stroke="#c2c2c2" stroke-width="2"/>
<path d="M18.300,141.800 L19.600,145.200 L22.900,143.700 L21.400,147 L24.900,148.300 L21.400,149.600 L22.900,152.900 L19.600,151.400 L18.300,154.800 L17,151.400 L13.700,152.900 L15.200,149.600 L11.700,148.300 L15.200,147 L13.700,143.700 L17,145.200 Z" fill="#c6c6c6"/>
<ellipse cx="50.500" cy="148" rx="7.500" ry="4.800" fill="none" stroke="#cdcdcd" stroke-width="1.500"/>
<path d="M45,152 q-2,3 1,4 q2,0.500 1.500,3" fill="none" stroke="#cdcdcd" stroke-width="1.300"/>
<path d="M51,146 V158.500 L54,155.500 L59.500,155 Z" fill="#cdcdcd" stroke="#4a4a4a" stroke-width="0.600"/>
<!-- row3: pen / type -->
<path d="M13.400,184.600 L15.800,176.200 L21.600,170.800 L26.800,175.800 L21.800,181.800 Z" fill="#bdbdbd" stroke="#dadada" stroke-width="0.700"/>
<path d="M13.500,184.500 L20.500,177" stroke="#3a3a3a" stroke-width="1"/>
<circle cx="20.800" cy="176.800" r="1.400" fill="#3a3a3a"/>
<path d="M23,168.500 L26,166.500 L30.500,171 L28.500,174 Z" fill="#cfcfcf"/>
<path d="M34.2,183.8 v3.400 h-3.400 z" fill="#e0e0e0"/>
<text x="51.300" y="182.900" font-family="Liberation Serif, serif" font-size="21" fill="#d0d0d0" text-anchor="middle">T</text>
<path d="M64.2,183.8 v3.400 h-3.400 z" fill="#e0e0e0"/>
<!-- row4: line / rect -->
<path d="M14,208.500 L27,194.500" stroke="#cdcdcd" stroke-width="1.400"/>
<path d="M34.2,207.8 v3.400 h-3.400 z" fill="#e0e0e0"/>
<rect x="44.500" y="195.500" width="13" height="11" fill="url(#tg)" stroke="#c8c8c8"/>
<path d="M64.2,207.8 v3.400 h-3.400 z" fill="#e0e0e0"/>
<!-- row5: brush / pencil -->
<path d="M28.800,216.500 L31,218.600 L22.800,227.800 L20,225.400 Z" fill="#c0c0c0"/>
<path d="M20,225.400 L22.800,227.800 Q21,233 12,231.600 Q17,230 17.500,226.500 Q18.500,224.800 20,225.400 Z" fill="#dcdcdc"/>
<path d="M53.500,218.300 Q56,216 58.300,218.300 Q59.600,220.500 58,222.300 L49,231.300 L43,233.500 L45,227.500 Z" fill="#b4b4b4"/>
<path d="M53.500,218.300 Q56,216 58.300,218.300 L49.800,226.800 L45,227.500 Z" fill="#d8d8d8"/>
<path d="M52,220 L56.600,224" stroke="#5a5a5a" stroke-width="1"/>
<path d="M43,233.500 L44.200,230 L46.600,232.200 Z" fill="#3e3e3e"/>
<path d="M64.2,231.8 v3.400 h-3.400 z" fill="#e0e0e0"/>
<!-- row6: blob brush / eraser -->
<path d="M13,246 H22 V250 H29 V252 L25,255.500 H13 Z" fill="#b8b8b8"/>
<path d="M17,249 Q22,243 29,241.500 L30.500,243.500 Q27,250 20.500,251 Q18,251 17,249 Z" fill="#3c3c3c"/>
<path d="M26,243.500 L31,240.500" stroke="#e0e0e0" stroke-width="2"/>
<path d="M48.500,243.800 Q49,242.600 50.500,242.300 L58,241 Q60.300,241 59.800,243 L56,252.500 Q55.500,253.800 54,254 L45.500,255 Q43,255 43.800,253 Z" fill="#d2d2d2"/>
<path d="M45.800,248.800 L57.800,246.600 L56,252.500 Q55.500,253.800 54,254 L45.500,255 Q43,255 43.800,253 Z" fill="#979797"/>
<path d="M64.2,255.8 v3.400 h-3.400 z" fill="#e0e0e0"/>
<!-- row7: rotate / scale -->
<path d="M19.900,268.400 A6.500,6.500 0 0 1 27.100,277" fill="none" stroke="#c0c0c0" stroke-width="1.300"/>
<path d="M27.100,277 A6.500,6.500 0 1 1 16.800,269.800" fill="none" stroke="#c0c0c0" stroke-width="1.400" stroke-dasharray="2.300 1.600"/>
<path d="M14.800,271.200 L18.300,266.600 L21.900,271.300 Z" fill="#c4c4c4"/>
<path d="M34.2,281.8 v3.400 h-3.400 z" fill="#e0e0e0"/>
<rect x="42.500" y="274.500" width="8" height="7" fill="#5c5c5c" stroke="#cdcdcd"/>
<rect x="46.500" y="268.500" width="12" height="10" fill="#606060" fill-opacity="0.850" stroke="#c8c8c8"/>
<path d="M52,274.500 L56,270.500 M53,270.500 H56 V273.500" stroke="#e8e8e8" stroke-width="1" fill="none"/>
<path d="M64.2,281.8 v3.400 h-3.400 z" fill="#e0e0e0"/>
<!-- row8: width/warp / free transform -->
<path d="M14,293 Q17,292 17.500,296 Q18,300 21,298 Q24,295 27.500,296 Q30.500,297.500 29.500,301 Q27,299 24.500,300.500 Q21,304 17,303 Q14,301.500 15.500,297 Z" fill="#b4b4b4"/>
<path d="M12.500,305 L23.500,294" stroke="#e8e8e8" stroke-width="1"/>
<circle cx="18" cy="299.500" r="1.800" fill="#4a4a4a" stroke="#f0f0f0"/>
<circle cx="12.800" cy="304.800" r="1.300" fill="#4a4a4a" stroke="#f0f0f0" stroke-width="0.800"/>
<circle cx="23.500" cy="294" r="1.300" fill="#4a4a4a" stroke="#f0f0f0" stroke-width="0.800"/>
<path d="M34.2,305.8 v3.400 h-3.400 z" fill="#e0e0e0"/>
<rect x="47.500" y="293.500" width="11" height="10" fill="none" stroke="#e0e0e0" stroke-width="1.300" stroke-dasharray="2 1.600"/>
<path d="M43,291.500 V303 L46,300 L52,299.500 Z" fill="#cdcdcd"/>
<!-- row9: shape builder / perspective grid -->
<circle cx="22.500" cy="320.500" r="5.500" fill="#6a6a6a" stroke="#bdbdbd"/>
<circle cx="17" cy="322" r="5" fill="#8a8a8a" stroke="#d8d8d8"/>
<path d="M14,322 h6" stroke="#f4f4f4" stroke-width="1.200" stroke-dasharray="1 1"/>
<path d="M24,319.500 V331.500 L27,328.500 L31.500,328 Z" fill="#d0d0d0" stroke="#4a4a4a" stroke-width="0.500"/>
<path d="M34.2,329.8 v3.400 h-3.400 z" fill="#e0e0e0"/>
<path d="M43,314.800 L54,318.800 V330.800 H43 Z" fill="#b2b2b2"/>
<path d="M54,325.300 L59,327.300 L59.800,330.800 H54 Z" fill="#a2a2a2"/>
<path d="M46.800,316 V331 M50.500,317.400 V331 M54,318.800 V331 M43,321.500 H54 M43,326.300 H57 M43,328.800 H59.500" stroke="#4a4a4a" stroke-width="0.900"/>
<path d="M43.300,314.800 V330.600 H59.800" fill="none" stroke="#d8d8d8" stroke-width="0.900"/>
<path d="M64.2,329.8 v3.400 h-3.400 z" fill="#e0e0e0"/>
<!-- row10: mesh / gradient -->
<rect x="13.500" y="343.500" width="15" height="11" fill="#6a6a6a" stroke="#d4d4d4"/>
<path d="M14,348 Q19,345 21,344 M14,352 Q20,351 25,344 M17,354 Q21,350 28,349 M22,354 Q24,352 28,352 M18,344 Q18,349 24,354 M14,345 Q17,347 17,354" fill="none" stroke="#e4e4e4" stroke-width="0.900"/>
<rect x="43.500" y="343.500" width="15" height="11" fill="url(#tg2)" stroke="#d4d4d4"/>
<!-- row11: eyedropper / blend -->
<path d="M14.500,379.500 L15,376.500 L22,369.500 L24.500,372 L17.500,379 Z" fill="#4a4a4a" stroke="#dcdcdc" stroke-width="1"/>
<path d="M21,368 L26,373" stroke="#cfcfcf" stroke-width="2.200"/>
<path d="M24,369 L27,365.500 Q29,364.500 29.500,366.500 Q30,368 28.500,369 L25.500,371.500 Z" fill="#c4c4c4"/>
<path d="M34.2,379.8 v3.400 h-3.400 z" fill="#e0e0e0"/>
<rect x="42" y="365" width="9" height="9" fill="#bdbdbd"/>
<rect x="46.500" y="368.500" width="9" height="9" rx="2" fill="#8a8a8a" stroke="#c8c8c8"/>
<circle cx="55.500" cy="375.500" r="4.200" fill="#5c5c5c" stroke="#dcdcdc" stroke-width="1.200"/>
<!-- row12: symbol sprayer / graph -->
<rect x="19.500" y="396.500" width="9" height="10" fill="#5c5c5c" stroke="#d0d0d0"/>
<circle cx="24" cy="401.500" r="2.300" fill="none" stroke="#e4e4e4" stroke-width="1.400"/>
<rect x="22" y="392" width="4" height="2.500" fill="#d0d0d0"/>
<path d="M21.500,396 L22.500,394 H25.500 L26.500,396" fill="#bdbdbd"/>
<g fill="#d4d4d4"><rect x="12" y="391" width="1" height="1"/><rect x="14" y="391" width="1" height="1"/><rect x="16" y="391" width="1" height="1"/><rect x="18" y="391" width="1" height="1"/><rect x="13" y="392.500" width="1" height="1"/><rect x="15" y="392.500" width="1" height="1"/><rect x="17" y="392.500" width="1" height="1"/><rect x="19" y="392.500" width="1" height="1"/><rect x="14" y="394" width="1" height="1"/><rect x="16" y="394" width="1" height="1"/><rect x="18" y="394" width="1" height="1"/><rect x="12" y="394" width="1" height="1"/></g>
<path d="M34.2,405.8 v3.400 h-3.400 z" fill="#e0e0e0"/>
<path d="M43.500,392 V405.500 H59" fill="none" stroke="#dcdcdc" stroke-width="1"/>
<rect x="46.500" y="399.500" width="2.500" height="6" fill="#7a7a7a" stroke="#d0d0d0" stroke-width="0.800"/>
<rect x="51" y="394.500" width="2.500" height="11" fill="#7a7a7a" stroke="#d0d0d0" stroke-width="0.800"/>
<rect x="55.500" y="397.500" width="2.500" height="8" fill="#7a7a7a" stroke="#d0d0d0" stroke-width="0.800"/>
<path d="M64.2,405.8 v3.400 h-3.400 z" fill="#e0e0e0"/>
<!-- row13: artboard / slice -->
<rect x="15.500" y="420.500" width="11" height="9" fill="url(#tg)" stroke="#d0d0d0"/>
<path d="M15.500,416 V419 M26.500,416 V419 M15.500,431 V434 M26.500,431 V434 M11,420.500 H14 M28,420.500 H31 M11,429.500 H14 M28,429.500 H31" stroke="#e0e0e0" stroke-width="1"/>
<path d="M43,432 L52,424 L54,426 Z" fill="#d4d4d4"/>
<path d="M52,424 L55,420.500 L61,419 L56,427 Z" fill="#a4a4a4"/>
<path d="M64.2,431.8 v3.400 h-3.400 z" fill="#e0e0e0"/>
<!-- row14: hand / zoom -->
<path d="M16.500,456.500 Q13,452 12,448.500 Q13.500,447.500 15,449.500 L16.500,451.500 L15.500,444 Q17,443 17.800,444.500 L19,449.500 L19.200,442 Q21,441 21.500,442.500 L21.800,449.500 L23.500,443 Q25.300,442.500 25.500,444 L24.800,450.500 L27.500,446.500 Q29.300,446.500 28.800,448.500 Q27,452.500 26,456.500 Z" fill="#c4c4c4"/>
<path d="M34.2,455.8 v3.400 h-3.400 z" fill="#e0e0e0"/>
<circle cx="49" cy="446.500" r="4.800" fill="#7c7c7c" stroke="#cdcdcd" stroke-width="1.700"/>
<path d="M52.500,450.500 L58.500,456.500" stroke="#c4c4c4" stroke-width="2.600" stroke-linecap="round"/>
<!-- fill / stroke -->
<rect x="24.500" y="483.500" width="35" height="35" fill="#4a4a4a" stroke="#2a2a2a"/>
<rect x="33.500" y="492.500" width="17" height="17" fill="#4a4a4a" stroke="#2a2a2a"/>
<rect x="6.500" y="465.500" width="35" height="35" fill="#4a4a4a" stroke="#2a2a2a"/>
<text x="0" y="0" transform="translate(23.800,488.600) scale(0.760,1)" font-size="16.500" fill="#ececec" text-anchor="middle" font-family="Liberation Sans, sans-serif">?</text>
<g font-size="8" font-weight="bold" fill="#ececec" text-anchor="middle" font-family="Liberation Sans, sans-serif"><text x="56" y="492">?</text><text x="29" y="516">?</text><text x="56" y="516">?</text></g>
<path d="M51.500,469.500 H55.500 Q58,470 58,474" fill="none" stroke="#7e7e7e" stroke-width="1.200"/>
<path d="M53.500,466.500 L50.500,469.500 L53.500,472.500 Z M55,473 H61 L58,476.500 Z" fill="#7e7e7e"/>
<rect x="9.500" y="510.500" width="8" height="8" fill="#1a1a1a" stroke="#e8e8e8"/>
<rect x="11.500" y="512.500" width="4" height="4" fill="#4a4a4a"/>
<rect x="6.500" y="507.500" width="8" height="8" fill="#f4f4f4" stroke="#2a2a2a"/>
<!-- color buttons -->
<rect x="7.500" y="526.500" width="60" height="18" fill="#5a5a5a" stroke="#3a3a3a"/>
<rect x="8" y="527" width="19.500" height="17" fill="#343434"/>
<path d="M27.500,526.500 V544.500 M47.500,526.500 V544.500" stroke="#3a3a3a"/>
<rect x="11.500" y="529.500" width="12" height="12" fill="#fff" stroke="#111" stroke-width="1.400"/>
<rect x="31.500" y="529.500" width="12" height="12" fill="url(#tg3)" stroke="#111" stroke-width="1.400"/>
<rect x="51.500" y="529.500" width="12" height="12" fill="#fff" stroke="#111" stroke-width="1.400"/>
<path d="M52.500,540.500 L62.500,530.500" stroke="#ff0000" stroke-width="1.900"/>
<!-- draw mode buttons -->
<rect x="7.500" y="551.500" width="60" height="16" fill="#5a5a5a" stroke="#3a3a3a"/>
<rect x="8" y="552" width="19.500" height="15" fill="#343434"/>
<path d="M27.500,551.500 V567.500 M47.500,551.500 V567.500" stroke="#3a3a3a"/>
<circle cx="16.500" cy="559" r="3.600" fill="#555" stroke="#c4c4c4" stroke-width="1.200"/>
<rect x="17" y="560" width="6" height="5" fill="url(#tg4)"/>
<rect x="39" y="560" width="4.500" height="5" fill="url(#tg4)"/>
<circle cx="37" cy="558.500" r="3.900" fill="#6a6a6a" stroke="#d0d0d0" stroke-width="1.200"/>
<circle cx="57" cy="559" r="3.600" fill="none" stroke="#777" stroke-width="1.100"/>
<rect x="57" y="559.500" width="3.500" height="3" fill="#777"/>
<!-- screen mode -->
<rect x="24.500" y="581.500" width="14" height="11" fill="#666" stroke="#d4d4d4" stroke-width="1.200"/>
<rect x="25" y="582" width="13" height="2" fill="#a8a8a8"/>
<rect x="30.500" y="577" width="14" height="11.500" fill="url(#tg)" stroke="#d4d4d4" stroke-width="1.200"/>
<rect x="31" y="577" width="13" height="2.500" fill="#b8b8b8"/>
</svg>

</body></html>
